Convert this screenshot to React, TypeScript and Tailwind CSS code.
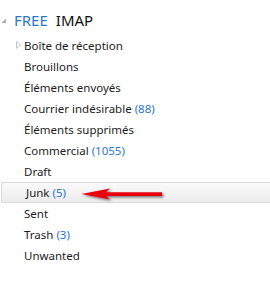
import React from "react";

interface Folder {
  name: string;
  count?: number;
  selected?: boolean;
  expandable?: boolean;
}

const folders: Folder[] = [
  { name: "Boîte de réception", expandable: true },
  { name: "Brouillons" },
  { name: "Éléments envoyés" },
  { name: "Courrier indésirable", count: 88 },
  { name: "Éléments supprimés" },
  { name: "Commercial", count: 1055 },
  { name: "Draft" },
  { name: "Junk", count: 5, selected: true },
  { name: "Sent" },
  { name: "Trash", count: 3 },
  { name: "Unwanted" },
];

const RedArrow = () => (
  <svg
    className="absolute left-[78px] top-[2px]"
    width="92"
    height="20"
    viewBox="0 0 92 20"
  >
    <defs>
      <filter id="sh" x="-10%" y="-50%" width="130%" height="200%">
        <feDropShadow dx="1.5" dy="1.5" stdDeviation="1.3" floodColor="#000" floodOpacity="0.5" />
      </filter>
    </defs>
    <g filter="url(#sh)">
      <polygon points="1.5,9 30,3.5 26,7.3 82,7.3 82,11 26,11 30,14.5" fill="#e8000b" />
    </g>
  </svg>
);

const App = () => {
  return (
    <div className="w-[270px] h-[281px] bg-white overflow-hidden font-['Noto_Sans',sans-serif] text-[11.5px] text-[#1c1c24]">
      {/* Account header */}
      <div className="flex items-center h-[35px] pl-[1px] pt-[6px]">
        <svg width="6" height="6" viewBox="0 0 6 6" className="mr-[7px]">
          <polygon points="5,0.5 5,5 0.5,5" fill="#a9a9a9" />
        </svg>
        <span className="text-[15px] text-[#2b78d0]">FREE</span>
        <span className="text-[15px] ml-[8px] text-[#111]">IMAP</span>
      </div>

      {/* Folder list */}
      <div className="flex flex-col">
        {folders.map((f) => (
          <div
            key={f.name}
            className={`relative flex items-center h-[21px] pl-[24px] ${
              f.selected
                ? "ml-[1px] rounded-l-[2px] border-y border-l border-[#d9d9d9] bg-gradient-to-b from-[#fafafa] to-[#ececec] pl-[23px]"
                : ""
            }`}
          >
            {f.expandable && (
              <svg width="6" height="8" viewBox="0 0 6 8" className="absolute left-[16px] top-[6px]">
                <polygon points="0.5,0.5 4.5,4 0.5,7.5" fill="none" stroke="#c4c4c4" strokeWidth="1" />
              </svg>
            )}
            <span className="whitespace-nowrap">{f.name}</span>
            {f.count !== undefined && (
              <span className="ml-[3px] text-[#2b78d0]">({f.count})</span>
            )}
            {f.selected && <RedArrow />}
          </div>
        ))}
      </div>
    </div>
  );
};

export default App;
